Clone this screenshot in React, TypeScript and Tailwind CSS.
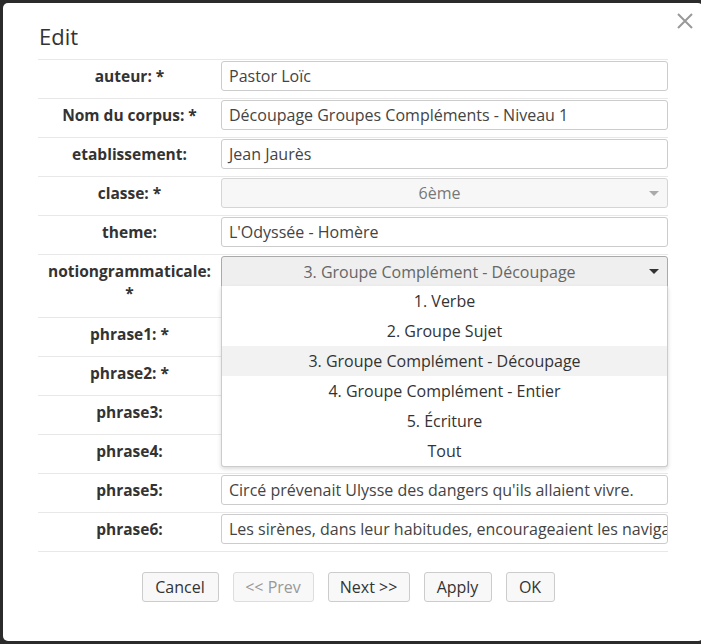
import React from "react";

const font = { fontFamily: '"Open Sans", "Noto Sans", sans-serif' };

interface Row {
  label: string;
  value?: string;
  kind?: "input" | "select" | "open";
  tall?: boolean;
}

const rows: Row[] = [
  { label: "auteur: *", value: "Pastor Loïc" },
  { label: "Nom du corpus: *", value: "Découpage Groupes Compléments - Niveau 1" },
  { label: "etablissement:", value: "Jean Jaurès" },
  { label: "classe: *", value: "6ème", kind: "select" },
  { label: "theme:", value: "L'Odyssée - Homère" },
  { label: "notiongrammaticale: *", value: "3. Groupe Complément - Découpage", kind: "open", tall: true },
  { label: "phrase1: *", value: "" },
  { label: "phrase2: *", value: "" },
  { label: "phrase3:", value: "" },
  { label: "phrase4:", value: "" },
  { label: "phrase5:", value: "Circé prévenait Ulysse des dangers qu'ils allaient vivre." },
  { label: "phrase6:", value: "Les sirènes, dans leur habitudes, encourageaient les navigateurs à venir" },
];

const options = [
  "1. Verbe",
  "2. Groupe Sujet",
  "3. Groupe Complément - Découpage",
  "4. Groupe Complément - Entier",
  "5. Écriture",
  "Tout",
];

function Field({ row }: { row: Row }) {
  if (row.kind === "select") {
    return (
      <div className="flex h-[30px] items-center rounded-[3px] border border-[#d5d5d5] bg-[#f7f7f7] px-2 text-[16px] text-[#777]">
        <span className="flex-1 text-center">{row.value}</span>
        <span className="h-0 w-0 border-x-[5px] border-t-[5px] border-x-transparent border-t-[#aaa]" />
      </div>
    );
  }
  if (row.kind === "open") {
    return (
      <div className="relative">
        <div className="flex h-[31px] items-center rounded-t-[3px] border border-[#aaa] bg-[#efefef] px-2 text-[16px] text-[#666]">
          <span className="flex-1 text-center">{row.value}</span>
          <span className="h-0 w-0 border-x-[5px] border-t-[5px] border-x-transparent border-t-[#333]" />
        </div>
        {/* open dropdown list */}
        <ul className="absolute left-0 right-0 top-[30px] z-10 rounded-b-[3px] border border-t-0 border-[#ccc] bg-white shadow-[0_2px_4px_rgba(0,0,0,0.15)]">
          {options.map((o) => (
            <li
              key={o}
              className={
                "flex h-[30px] items-center justify-center text-[16px] text-[#333] " +
                (o === row.value ? "bg-[#f2f2f2]" : "")
              }
            >
              {o}
            </li>
          ))}
        </ul>
      </div>
    );
  }
  return (
    <div className="flex h-[30px] items-center overflow-hidden whitespace-nowrap rounded-[3px] border border-[#ccc] bg-white pl-[7px] text-[16px] text-[#444]">
      {row.value}
    </div>
  );
}

function Button({ label, width, disabled }: { label: string; width: string; disabled?: boolean }) {
  return (
    <button
      className={
        "h-[30px] rounded-[3px] border bg-[#f8f8f8] text-[16px] " +
        width +
        " " +
        (disabled ? "border-[#ddd] text-[#999]" : "border-[#ccc] text-[#333]")
      }
    >
      {label}
    </button>
  );
}

export default function App() {
  return (
    <div className="h-[644px] w-[701px] overflow-hidden bg-[#2b2b2b] pl-[3px] pt-[3px]" style={font}>
      <div className="h-[638px] w-[700px] rounded-[5px] bg-white px-[35px]">
        {/* Header */}
        <div className="relative flex h-[56px] items-end pb-[9px]">
          <h1 className="pl-[1px] text-[22px] leading-[28px] text-[#333]">Edit</h1>
          <button className="absolute right-[-25px] top-[10px] text-[#999]">
            <svg width="16" height="16" viewBox="0 0 16 16">
              <path d="M1 1L15 15M15 1L1 15" stroke="currentColor" strokeWidth="2" />
            </svg>
          </button>
        </div>

        {/* Form table */}
        <div className="w-[630px]">
          {rows.map((row) => (
            <div key={row.label} className="flex border-t border-[#e8e8e8]">
              <div
                className={
                  "w-[183px] shrink-0 px-[8px] pt-[5px] text-center text-[15.5px] font-bold leading-[22px] text-[#333] " +
                  (row.tall ? "pb-[13px]" : "pb-[11px]")
                }
              >
                {row.label}
              </div>
              <div className={"min-w-0 flex-1 pt-[1px] " + (row.tall ? "" : "pb-[7px]")}>
                <Field row={row} />
              </div>
            </div>
          ))}
          <div className="border-t border-[#e8e8e8]" />
        </div>

        {/* Footer buttons */}
        <div className="flex justify-center gap-[14px] pr-[10px] pt-[20px]">
          <Button label="Cancel" width="w-[77px]" />
          <Button label="<< Prev" width="w-[81px]" disabled />
          <Button label="Next >>" width="w-[82px]" />
          <Button label="Apply" width="w-[68px]" />
          <Button label="OK" width="w-[49px]" />
        </div>
      </div>
    </div>
  );
}
